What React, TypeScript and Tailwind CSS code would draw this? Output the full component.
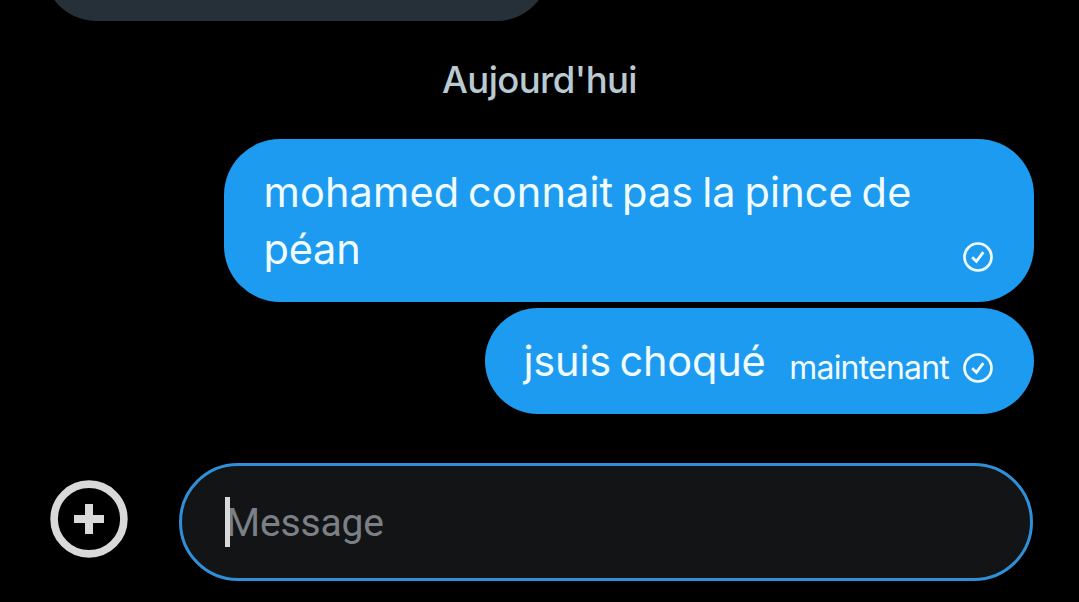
import React from 'react';

interface BubbleProps {
	className: string;
	children: React.ReactNode;
}

function SentIcon() {
	return (
		<svg
			className="h-[30px] w-[30px] shrink-0"
			viewBox="0 0 30 30"
			fill="none"
			stroke="currentColor"
		>
			<circle cx="15" cy="15" r="13.5" strokeWidth="2.7" />
			<path d="M9.2 15.2l4.2 4.2 6.9-9.2" strokeWidth="2.8" />
		</svg>
	);
}

function Bubble({ className, children }: BubbleProps) {
	return (
		<div
			className={`flex items-end bg-[#1d9bf0] text-[#f0fcff] ${className}`}
		>
			{children}
		</div>
	);
}

export default function App() {
	return (
		<div className="flex h-[602px] w-[1079px] flex-col overflow-hidden bg-black font-['Inter',sans-serif]">
			<div className="h-[21px] shrink-0 pl-[43px]">
				<div className="-mt-[100px] h-[121px] w-[507px] rounded-b-[54px] bg-[#253038]" />
			</div>

			<div className="mt-9 h-[46px] text-center text-[36.5px] leading-[46px] font-medium tracking-[-0.6px] text-[#b9cad3]">
				Aujourd'hui
			</div>

			<div className="mt-9 flex flex-col items-end gap-1.5 pr-[45px]">
				<Bubble className="h-[163px] w-[810px] justify-between rounded-[56px] pr-[41px] pb-[30px] pl-[39.5px]">
					<p className="-mb-[6px] text-[41.5px] leading-[57px] tracking-[0.1px] whitespace-nowrap [word-spacing:-3px]">
						mohamed connait pas la pince de
						<br />
						<span className="tracking-[-0.2px]">péan</span>
					</p>
					<SentIcon />
				</Bubble>
				<Bubble className="h-[106px] w-[549px] justify-between rounded-full pr-[41px] pb-[31px] pl-[38.5px]">
					<p className="-mb-[7px] text-[41.5px] leading-[57px] tracking-[-0.2px] whitespace-nowrap [word-spacing:-3px]">
						jsuis choqué
					</p>
					<div className="flex items-center gap-3.5">
						<span className="text-[32px] leading-[30px] tracking-[-0.8px] whitespace-nowrap">
							maintenant
						</span>
						<SentIcon />
					</div>
				</Bubble>
			</div>

			<div className="mt-[49px] flex items-center pl-[50px]">
				<svg
					className="-mt-1.5 h-[78px] w-[78px] shrink-0"
					viewBox="0 0 78 78"
					fill="none"
					stroke="#d9d9d9"
				>
					<circle cx="39" cy="39" r="34.9" strokeWidth="7.6" />
					<path d="M24 39h30M39 24v30" strokeWidth="8" />
				</svg>
				<div className="ml-[51px] flex h-[118px] w-[854px] items-center rounded-full border-[3px] border-[#2f8fd8] bg-[#121416] pl-[43px]">
					<span className="z-10 h-[50px] w-[5px] bg-[#d9d9d9]" />
					<span className="-ml-[5px] pt-[2px] pl-[1px] font-['Roboto',sans-serif] text-[39px] leading-[50px] tracking-[-0.15px] text-[#7b8086]">
						Message
					</span>
				</div>
			</div>
		</div>
	);
}
